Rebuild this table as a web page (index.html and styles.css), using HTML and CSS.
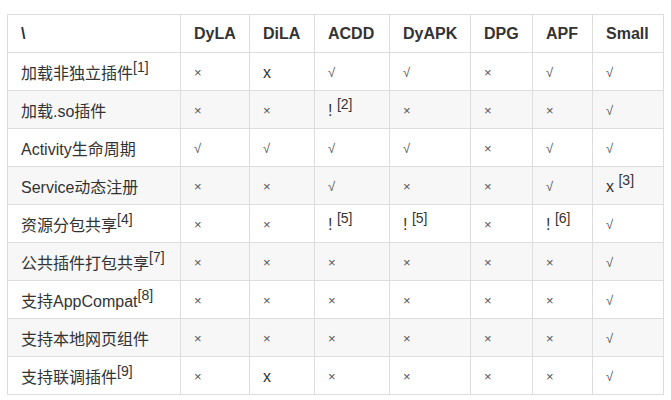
FILE: index.html
```html
<!DOCTYPE html>
<html>
<head>
<meta charset="utf-8">
<link rel="stylesheet" href="styles.css">
</head>
<body>
<table class="cmp">
  <colgroup>
    <col class="c0"><col class="c1"><col class="c2"><col class="c3"><col class="c4"><col class="c5"><col class="c6"><col class="c7">
  </colgroup>
  <thead>
    <tr><th>\</th><th>DyLA</th><th>DiLA</th><th>ACDD</th><th>DyAPK</th><th>DPG</th><th>APF</th><th>Small</th></tr>
  </thead>
  <tbody>
    <tr><td>加载非独立插件<sup>[1]</sup></td><td class="m">×</td><td class="x">x</td><td class="m">√</td><td class="m">√</td><td class="m">×</td><td class="m">√</td><td class="m">√</td></tr>
    <tr><td>加载.so插件</td><td class="m">×</td><td class="m">×</td><td class="x">! <sup>[2]</sup></td><td class="m">×</td><td class="m">×</td><td class="m">×</td><td class="m">√</td></tr>
    <tr><td>Activity生命周期</td><td class="m">√</td><td class="m">√</td><td class="m">√</td><td class="m">√</td><td class="m">×</td><td class="m">√</td><td class="m">√</td></tr>
    <tr><td>Service动态注册</td><td class="m">×</td><td class="m">×</td><td class="m">√</td><td class="m">×</td><td class="m">×</td><td class="m">√</td><td class="x">x <sup>[3]</sup></td></tr>
    <tr><td>资源分包共享<sup>[4]</sup></td><td class="m">×</td><td class="m">×</td><td class="x">! <sup>[5]</sup></td><td class="x">! <sup>[5]</sup></td><td class="m">×</td><td class="x">! <sup>[6]</sup></td><td class="m">√</td></tr>
    <tr><td>公共插件打包共享<sup>[7]</sup></td><td class="m">×</td><td class="m">×</td><td class="m">×</td><td class="m">×</td><td class="m">×</td><td class="m">×</td><td class="m">√</td></tr>
    <tr><td>支持AppCompat<sup>[8]</sup></td><td class="m">×</td><td class="m">×</td><td class="m">×</td><td class="m">×</td><td class="m">×</td><td class="m">×</td><td class="m">√</td></tr>
    <tr><td>支持本地网页组件</td><td class="m">×</td><td class="m">×</td><td class="m">×</td><td class="m">×</td><td class="m">×</td><td class="m">×</td><td class="m">√</td></tr>
    <tr><td>支持联调插件<sup>[9]</sup></td><td class="m">×</td><td class="x">x</td><td class="m">×</td><td class="m">×</td><td class="m">×</td><td class="m">×</td><td class="m">√</td></tr>
  </tbody>
</table>
</body>
</html>
```
FILE: styles.css
```css
html, body {
  margin: 0;
  padding: 0;
  background: #fff;
}
body {
  padding: 14px 0 0 7px;
  font-family: "Liberation Sans", "Noto Sans CJK SC", sans-serif;
  font-size: 16px;
  color: #333;
}
.cmp {
  border-collapse: collapse;
  table-layout: fixed;
  width: 656px;
}
.c0 { width: 173px; }
.c1 { width: 69px; }
.c2 { width: 65px; }
.c3 { width: 75px; }
.c4 { width: 81px; }
.c5 { width: 62px; }
.c6 { width: 60px; }
.c7 { width: 71px; }
.cmp th, .cmp td {
  border: 1px solid #ddd;
  height: 38px;
  padding: 0 0 0 13px;
  text-align: left;
  vertical-align: middle;
  box-sizing: border-box;
  white-space: nowrap;
}
.cmp th {
  font-weight: bold;
  color: #333;
  padding-top: 1px;
}
.cmp tbody tr:nth-child(even) td {
  background: #f7f7f7;
}
.cmp td.m {
  font-size: 13px;
  color: #555;
  padding-top: 2px;
}
.cmp td.x {
  color: #333;
  padding-top: 2px;
}
.cmp sup {
  font-size: 14px;
  line-height: 0;
  vertical-align: 7px;
}
```
